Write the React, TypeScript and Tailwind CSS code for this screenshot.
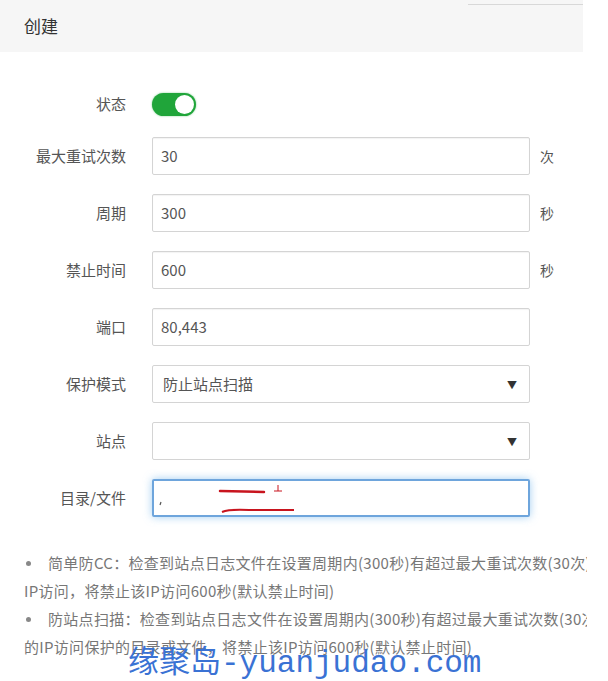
import React from "react";

const font = { fontFamily: '"Noto Sans CJK SC", "Noto Sans", sans-serif' };

function Row({ label, children, unit }: { label: string; children: React.ReactNode; unit?: string }) {
  return (
    <div className="flex items-center h-[38px]">
      <div className="w-[126px] text-right text-[15px] text-[#555] pr-0">{label}</div>
      <div className="ml-[26px] w-[378px] h-full">{children}</div>
      {unit && <div className="ml-[10px] text-[14px] text-[#555]">{unit}</div>}
    </div>
  );
}

function TextBox({ value }: { value: string }) {
  return (
    <div className="h-full w-full border border-[#d4d4d4] rounded-[2px] bg-white flex items-center px-[8px] text-[15px] text-[#555] shadow-[inset_0_1px_1px_rgba(0,0,0,0.05)]">
      {value}
    </div>
  );
}

function SelectBox({ value }: { value: string }) {
  return (
    <div className="h-full w-full border border-[#d4d4d4] rounded-[2px] bg-white flex items-center justify-between pl-[10px] pr-[12px] text-[15px] text-[#555]">
      <span>{value}</span>
      <span className="text-[10px] text-[#333]">▼</span>
    </div>
  );
}

function Bullet() {
  return (
    <span className="w-[48px] shrink-0 flex items-center pl-[26px]">
      <span className="w-[5px] h-[5px] rounded-full bg-[#888]" />
    </span>
  );
}

export default function App() {
  return (
    <div className="relative w-[608px] h-[681px] bg-white overflow-hidden" style={font}>
      <div className="absolute top-[4px] left-[468px] w-[115px] h-px bg-[#d8d8d8]" />
      <div className="w-[583px] h-[52px] bg-[#f6f6f6] flex items-center pl-[24px] text-[17px] text-[#333]">
        创建
      </div>

      <div className="flex items-center h-[38px] mt-[33px]">
        <div className="w-[126px] text-right text-[15px] text-[#555]">状态</div>
        <div className="ml-[26px] w-[44px] h-[23px] rounded-full bg-[#20a53a] flex items-center justify-end pr-[2px] shadow-[0_0_2px_rgba(32,165,58,0.6)]">
          <div className="w-[19px] h-[19px] rounded-full bg-white" />
        </div>
      </div>

      <div className="flex flex-col gap-[19px] mt-[14px]">
        <Row label="最大重试次数" unit="次">
          <TextBox value="30" />
        </Row>
        <Row label="周期" unit="秒">
          <TextBox value="300" />
        </Row>
        <Row label="禁止时间" unit="秒">
          <TextBox value="600" />
        </Row>
        <Row label="端口">
          <TextBox value="80,443" />
        </Row>
        <Row label="保护模式">
          <SelectBox value="防止站点扫描" />
        </Row>
        <Row label="站点">
          <SelectBox value="" />
        </Row>
        <Row label="目录/文件">
          <div className="relative h-full w-full border-2 border-[#6ea5dc] rounded-[2px] bg-white shadow-[0_0_8px_rgba(102,175,233,0.6)]">
            <svg className="absolute left-0 top-0" width="378" height="38" viewBox="0 0 378 38">
              <path d="M66 10 L110 11" stroke="#c8141e" strokeWidth="2.5" strokeLinecap="round" fill="none" />
              <path d="M124 4 L124 10 M120 10 L128 10" stroke="#c8141e" strokeWidth="1" fill="none" />
              <path d="M68 31 Q75 28 95 29 L140 29" stroke="#c8141e" strokeWidth="2" fill="none" />
              <path d="M7 21 L6 24" stroke="#555" strokeWidth="1.2" fill="none" />
            </svg>
          </div>
        </Row>
      </div>

      <div className="mt-[32px] text-[15px] text-[#777] leading-[28px] whitespace-nowrap w-[587px] overflow-hidden tracking-[0.3px]">
        <div className="flex">
          <Bullet />
          <span>简单防CC：检查到站点日志文件在设置周期内(300秒)有超过最大重试次数(30次)的</span>
        </div>
        <div className="pl-[24px]">IP访问，将禁止该IP访问600秒(默认禁止时间)</div>
        <div className="flex">
          <Bullet />
          <span>防站点扫描：检查到站点日志文件在设置周期内(300秒)有超过最大重试次数(30次)</span>
        </div>
        <div className="pl-[24px]">的IP访问保护的目录或文件，将禁止该IP访问600秒(默认禁止时间)</div>
      </div>

      <div
        className="absolute left-[128px] top-[648px] text-[31px] leading-none text-[#3a72d4] whitespace-nowrap"
        style={{ fontFamily: '"Liberation Mono", "Noto Sans CJK SC", monospace' }}
      >
        缘聚岛-yuanjudao.com
      </div>
    </div>
  );
}
